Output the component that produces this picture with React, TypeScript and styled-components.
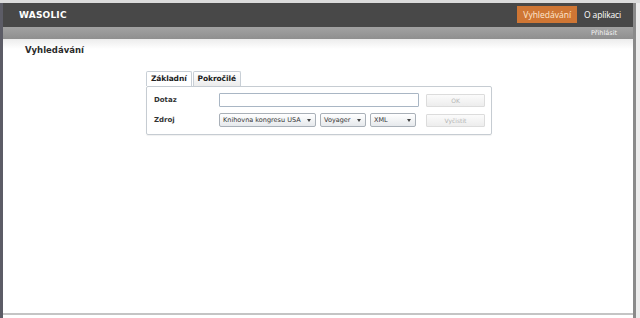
import React from 'react'
import styled, { createGlobalStyle } from 'styled-components'

const GlobalStyle = createGlobalStyle`
  html, body {
    margin: 0;
    padding: 0;
    background: #ffffff;
  }
  body {
    font-family: "DejaVu Sans", Verdana, sans-serif;
  }
`

const SOURCES = ['Knihovna kongresu USA', 'Voyager', 'XML']

const Frame = styled.div`
  display: flex;
  width: 640px;
  height: 318px;
  box-sizing: border-box;
  border-top: 3px solid #dcdcdc;
  background: #f4f4f4;
`
const LeftEdge = styled.div`
  width: 3px;
  background: #5c5c66;
`
const RightEdge = styled.div`
  width: 7px;
  display: flex;
  & > div:first-child {
    width: 3px;
    background: #8a8a8a;
  }
  & > div:last-child {
    flex: 1;
    background: #ececec;
  }
`
const Page = styled.div`
  flex: 1;
  display: flex;
  flex-direction: column;
  background: #ffffff;
`
const TopBar = styled.div`
  height: 24px;
  display: flex;
  align-items: center;
  justify-content: space-between;
  padding: 0 12px 0 16px;
  background: #484848;
`
const Logo = styled.div`
  color: #ffffff;
  font-family: Verdana, "DejaVu Sans", sans-serif;
  font-weight: bold;
  font-size: 9px;
  letter-spacing: 0.2px;
`
const Nav = styled.div`
  display: flex;
  align-items: center;
  gap: 7px;
  margin-top: -2px;
`
const NavItem = styled.div<{ active?: boolean }>`
  height: 17px;
  line-height: 17px;
  padding: 0 ${({ active }) => active ? '6px' : '0'};
  font-family: "Open Sans", sans-serif;
  font-size: 8.5px;
  letter-spacing: ${({ active }) => active ? '0' : '-0.15px'};
  color: ${({ active }) => active ? '#ffe6cf' : '#ffffff'};
  background: ${({ active }) => active ? '#cf7634' : 'transparent'};
`
const SubBar = styled.div`
  height: 12px;
  display: flex;
  align-items: center;
  justify-content: flex-end;
  padding-right: 16px;
  background: linear-gradient(#a2a2a2, #8f8f8f);
`
const LoginLink = styled.span`
  font-family: "DejaVu Sans", sans-serif;
  font-size: 6.5px;
  color: #f4f4f4;
`
const Content = styled.div`
  flex: 1;
  display: flex;
  flex-direction: column;
  background: linear-gradient(#ececec 0px, #ffffff 10px);
  border-bottom: 2px solid #c4c4c4;
  margin-bottom: 3px;
`
const Heading = styled.h1`
  margin: 6px 0 0 22px;
  font-family: "DejaVu Sans", sans-serif;
  font-weight: bold;
  font-size: 8.5px;
  color: #2a2a2a;
`
const SearchBox = styled.div`
  margin: 16px 0 0 143px;
  width: 346px;
`
const Tabs = styled.div`
  display: flex;
  gap: 1px;
`
const Tab = styled.div<{ active?: boolean }>`
  height: 14px;
  line-height: 14px;
  padding: 0 4px;
  font-family: "DejaVu Sans", sans-serif;
  font-weight: bold;
  font-size: 7.5px;
  letter-spacing: -0.1px;
  color: #222;
  border: 1px solid #c8cfd6;
  border-bottom: none;
  border-radius: 2px 2px 0 0;
  background: ${({ active }) => active ? '#ffffff' : 'linear-gradient(#ffffff, #ececec)'};
  margin-bottom: ${({ active }) => active ? '-1px' : '0'};
  position: relative;
`
const Panel = styled.div`
  border: 1px solid #c6ccd2;
  border-radius: 2px;
  padding: 6px 5px 7px 7px;
  display: grid;
  grid-template-columns: 65px 200px 1fr;
  row-gap: 6px;
  align-items: center;
  box-shadow: 0 1px 1px rgba(0, 0, 0, 0.06);
`
const Label = styled.div`
  font-family: "DejaVu Sans", sans-serif;
  font-weight: bold;
  font-size: 7px;
  color: #333;
`
const TextInput = styled.div`
  height: 12px;
  border: 1px solid #a9b6c4;
  border-radius: 1px;
  background: #fff;
`
const Selects = styled.div`
  display: flex;
  gap: 4px;
`
const Select = styled.div<{ w: number }>`
  width: ${({ w }) => w}px;
  box-sizing: border-box;
  height: 14px;
  display: flex;
  align-items: center;
  justify-content: space-between;
  padding: 0 3px;
  border: 1px solid #a9b0b8;
  border-radius: 2px;
  background: linear-gradient(#ffffff, #e6e9ec);
  font-family: "DejaVu Sans", sans-serif;
  font-size: 6.5px;
  color: #333;
`
const Caret = styled.span`
  width: 0;
  height: 0;
  border-left: 2px solid transparent;
  border-right: 2px solid transparent;
  border-top: 3px solid #444;
  margin-right: 1px;
`
const Button = styled.div`
  width: 59px;
  height: 13px;
  box-sizing: border-box;
  margin-left: 7px;
  display: flex;
  align-items: center;
  justify-content: center;
  border: 1px solid #dcdcdc;
  border-radius: 1px;
  background: linear-gradient(#fbfbfb, #ededed);
  font-family: "DejaVu Sans", sans-serif;
  font-size: 6px;
  color: #b4b4b4;
`

export default function App() {
  const widths = [97, 46, 46]
  return (
    <>
      <GlobalStyle />
      <Frame>
        <LeftEdge />
        <Page>
          <TopBar>
            <Logo>WASOLIC</Logo>
            <Nav>
              <NavItem active>Vyhledávání</NavItem>
              <NavItem>O aplikaci</NavItem>
            </Nav>
          </TopBar>
          <SubBar>
            <LoginLink>Přihlásit</LoginLink>
          </SubBar>
          <Content>
            <Heading>Vyhledávání</Heading>
            <SearchBox>
              <Tabs>
                <Tab active>Základní</Tab>
                <Tab>Pokročilé</Tab>
              </Tabs>
              <Panel>
                <Label>Dotaz</Label>
                <TextInput />
                <Button>OK</Button>
                <Label>Zdroj</Label>
                <Selects>
                  {SOURCES.map((s, i) => (
                    <Select key={s} w={widths[i]}>
                      {s}
                      <Caret />
                    </Select>
                  ))}
                </Selects>
                <Button>Vyčistit</Button>
              </Panel>
            </SearchBox>
          </Content>
        </Page>
        <RightEdge>
          <div />
          <div />
        </RightEdge>
      </Frame>
    </>
  )
}
